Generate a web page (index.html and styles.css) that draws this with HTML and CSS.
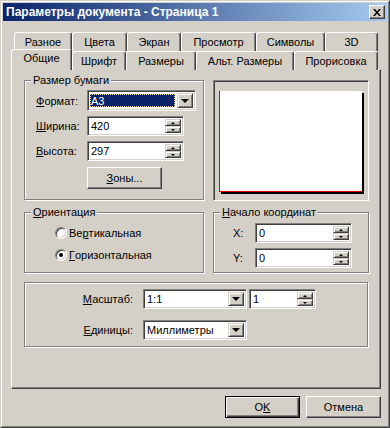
FILE: index.html
```html
<!DOCTYPE html>
<html lang="ru">
<head>
    <meta charset="UTF-8">
    <meta name="viewport" content="width=device-width, initial-scale=1.0">
    <title>Параметры документа</title>
    <link rel="stylesheet" href="styles.css">
</head>
<body>
    <div class="window">
        <div class="frame">
            <div class="titlebar">
                <span class="title">Параметры документа - Страница 1</span>
                <span class="close">
                    <svg width="8" height="7" viewBox="0 0 8 7"><path d="M0 0h2l2 2.5L6 0h2L5 3.5 8 7H6L4 4.5 2 7H0l3-3.5z" fill="#000"/></svg>
                </span>
            </div>

            <div class="body">
                <div class="tab-row back">
                    <div class="tab">Разное</div>
                    <div class="tab">Цвета</div>
                    <div class="tab">Экран</div>
                    <div class="tab">Просмотр</div>
                    <div class="tab">Символы</div>
                    <div class="tab">3D</div>
                </div>
                <div class="tab-row front">
                    <div class="tab active">Общие</div>
                    <div class="tab">Шрифт</div>
                    <div class="tab">Размеры</div>
                    <div class="tab">Альт. Размеры</div>
                    <div class="tab">Прорисовка</div>
                </div>

                <div class="panel">
                    <div class="group paper-size">
                        <div class="group-title">Размер бумаги</div>
                        <div class="field first">
                            <span class="label"><u>Ф</u>ормат:</span>
                            <div class="combo wide">
                                <span class="value selected">А3</span>
                                <span class="drop"><i class="arrow-down"></i></span>
                            </div>
                        </div>
                        <div class="field">
                            <span class="label"><u>Ш</u>ирина:</span>
                            <div class="edit size">
                                <span class="value">420</span>
                                <span class="spin"><b class="spin-btn"><i class="tri-up"></i></b><b class="spin-btn"><i class="tri-down"></i></b></span>
                            </div>
                        </div>
                        <div class="field">
                            <span class="label"><u>В</u>ысота:</span>
                            <div class="edit size">
                                <span class="value">297</span>
                                <span class="spin"><b class="spin-btn"><i class="tri-up"></i></b><b class="spin-btn"><i class="tri-down"></i></b></span>
                            </div>
                        </div>
                        <button class="btn zones"><u>З</u>оны...</button>
                    </div>

                    <div class="preview sunken">
                        <div class="paper"></div>
                    </div>

                    <div class="group orient">
                        <div class="group-title"><u>О</u>риентация</div>
                        <div class="radio"><span class="radio-box"></span>Ве<u>р</u>тикальная</div>
                        <div class="radio"><span class="radio-box checked"></span><u>Г</u>оризонтальная</div>
                    </div>

                    <div class="group coords">
                        <div class="group-title"><u>Н</u>ачало координат</div>
                        <div class="field first">
                            <span class="label">X:</span>
                            <div class="edit coord">
                                <span class="value">0</span>
                                <span class="spin"><b class="spin-btn"><i class="tri-up"></i></b><b class="spin-btn"><i class="tri-down"></i></b></span>
                            </div>
                        </div>
                        <div class="field">
                            <span class="label">Y:</span>
                            <div class="edit coord">
                                <span class="value">0</span>
                                <span class="spin"><b class="spin-btn"><i class="tri-up"></i></b><b class="spin-btn"><i class="tri-down"></i></b></span>
                            </div>
                        </div>
                    </div>

                    <div class="group scale">
                        <div class="field first">
                            <span class="label"><u>М</u>асштаб:</span>
                            <div class="combo short">
                                <span class="value">1:1</span>
                                <span class="drop"><i class="arrow-down"></i></span>
                            </div>
                            <div class="edit factor">
                                <span class="value">1</span>
                                <span class="spin"><b class="spin-btn"><i class="tri-up"></i></b><b class="spin-btn"><i class="tri-down"></i></b></span>
                            </div>
                        </div>
                        <div class="field">
                            <span class="label"><u>Е</u>диницы:</span>
                            <div class="combo short">
                                <span class="value">Миллиметры</span>
                                <span class="drop"><i class="arrow-down"></i></span>
                            </div>
                        </div>
                    </div>
                </div>

                <div class="buttons">
                    <button class="btn default">O<u>K</u></button>
                    <button class="btn">Отмена</button>
                </div>
            </div>
        </div>
    </div>
</body>
</html>
```

FILE: styles.css
```css
* {
    box-sizing: border-box;
}
body {
    margin: 0;
    background: #d4d0c8;
    font-family: "Liberation Sans", Arial, sans-serif;
    font-size: 11px;
    color: #000;
}
u {
    text-decoration: underline;
}

/* window chrome */
.window {
    width: 390px;
    height: 428px;
    border: 1px solid;
    border-color: #d4d0c8 #404040 #404040 #d4d0c8;
}
.frame {
    height: 100%;
    border: 1px solid;
    border-color: #fff #808080 #808080 #fff;
    padding: 1px;
}
.titlebar {
    height: 18px;
    display: flex;
    align-items: center;
    justify-content: space-between;
    padding: 0 2px 0 3px;
    background: linear-gradient(to right, #0a246a, #a6caf0);
    color: #fff;
    font-weight: bold;
    font-size: 12px;
}
.close {
    width: 16px;
    height: 14px;
    display: flex;
    align-items: center;
    justify-content: center;
    background: #d4d0c8;
    border: 1px solid;
    border-color: #fff #404040 #404040 #fff;
    box-shadow: inset -1px -1px #808080;
}
.body {
    padding: 11px 6px 0 8px;
}

/* tabs */
.tab-row {
    display: grid;
}
.back {
    grid-template-columns: 58px 55px 54px 75px 69px 53px;
    height: 19px;
    margin-left: 3px;
}
.front {
    grid-template-columns: 61px 54px 70px 98px 84px;
    height: 18px;
}
.tab {
    display: flex;
    align-items: center;
    justify-content: center;
    background: #d4d0c8;
    border: 1px solid;
    border-bottom: 0;
    border-color: #fff #404040 transparent #fff;
    border-radius: 3px 3px 0 0;
    box-shadow: inset -1px 0 #808080;
}
.tab.active {
    position: relative;
    z-index: 1;
    height: 21px;
    margin-top: -2px;
    padding-bottom: 4px;
}

.panel {
    height: 320px;
    border: 1px solid;
    border-color: #fff #404040 #404040 #fff;
    box-shadow: inset -1px -1px #808080;
    padding: 10px 0 0 12px;
    display: grid;
    grid-template-columns: 180px 156px;
    column-gap: 9px;
    align-content: start;
    align-items: start;
}

/* group boxes */
.group {
    border: 1px solid #808080;
    box-shadow: inset 1px 1px #fff, 1px 1px #fff;
}
.group-title {
    display: table;
    margin: -7px 0 0 6px;
    padding: 0 2px;
    line-height: 13px;
    background: #d4d0c8;
}
.field {
    display: flex;
    align-items: center;
    margin-top: 5px;
}
.paper-size {
    height: 120px;
    padding-left: 11px;
}
.paper-size .group-title {
    margin-left: -5px;
}
.paper-size .field.first {
    margin-top: 3px;
}
.paper-size .label {
    width: 51px;
}
.zones {
    margin: 6px 0 0 51px;
    height: 19px;
}

.preview {
    height: 121px;
    padding: 10px 0 0 5px;
}
.paper {
    width: 143px;
    height: 101px;
    background: #fff;
    border-left: 1px solid #e00000;
    border-bottom: 1px solid #e00000;
    box-shadow: 2px 2px #000;
}

.orient,
.coords {
    height: 61px;
    margin-top: 11px;
}
.radio {
    display: flex;
    align-items: center;
    height: 16px;
    margin: 6px 0 0 30px;
}
.radio-box {
    width: 12px;
    height: 12px;
    margin-right: 2px;
    display: flex;
    align-items: center;
    justify-content: center;
    border-radius: 50%;
    background: #fff;
    border: 1px solid;
    border-color: #808080 #fff #fff #808080;
    box-shadow: inset 1px 1px #404040, inset -1px -1px #d4d0c8;
}
.radio-box.checked::after {
    content: "";
    width: 4px;
    height: 4px;
    border-radius: 50%;
    background: #000;
}

.coords .field {
    margin-left: 19px;
}
.coords .field.first {
    margin-top: 4px;
}
.coords .label {
    width: 22px;
}

.scale {
    grid-column: 1 / 3;
    width: 344px;
    height: 65px;
    margin-top: 9px;
    padding-top: 6px;
}
.scale .field.first {
    margin-top: 0;
}
.scale .field {
    margin-top: 11px;
}
.scale .label {
    width: 108px;
    margin-right: 10px;
    text-align: right;
}

/* inputs */
.sunken,
.edit,
.combo {
    border: 1px solid;
    border-color: #808080 #fff #fff #808080;
    box-shadow: inset 1px 1px #404040, inset -1px -1px #d4d0c8;
}
.edit,
.combo {
    height: 20px;
    display: flex;
    padding: 2px;
    background: #fff;
}
.combo {
    height: 21px;
}
.scale .combo {
    height: 20px;
}
.value {
    flex: 1;
    display: flex;
    align-items: center;
    padding-left: 1px;
}
.value.selected {
    margin: 1px 2px 1px 0;
    background: #0a246a;
    color: #fff;
    outline: 1px dotted #f5db95;
    outline-offset: -1px;
}
.wide {
    width: 109px;
}
.size,
.coord {
    width: 97px;
}
.short {
    width: 104px;
}
.factor {
    width: 67px;
    margin-left: 2px;
}

.drop,
.spin-btn {
    display: flex;
    align-items: center;
    justify-content: center;
    background: #d4d0c8;
    border: 1px solid;
    border-color: #d4d0c8 #404040 #404040 #d4d0c8;
    box-shadow: inset 1px 1px #fff, inset -1px -1px #808080;
}
.drop {
    width: 16px;
}
.spin {
    width: 16px;
    display: flex;
    flex-direction: column;
}
.spin-btn {
    flex: 1;
}
.arrow-down {
    border-left: 4px solid transparent;
    border-right: 4px solid transparent;
    border-top: 4px solid #000;
}
.tri-up,
.tri-down {
    border-left: 2px solid transparent;
    border-right: 2px solid transparent;
}
.tri-up {
    border-bottom: 2px solid #000;
}
.tri-down {
    border-top: 2px solid #000;
}

/* push buttons */
.btn {
    width: 75px;
    height: 22px;
    padding: 0;
    font: inherit;
    color: #000;
    background: #d4d0c8;
    border: 1px solid;
    border-color: #fff #404040 #404040 #fff;
    box-shadow: inset -1px -1px #808080;
}
.btn.default {
    border-color: #000;
    box-shadow: inset 1px 1px #fff, inset -1px -1px #404040, inset -2px -2px #808080;
}
.buttons {
    display: flex;
    justify-content: flex-end;
    gap: 6px;
    margin-top: 7px;
}
```
